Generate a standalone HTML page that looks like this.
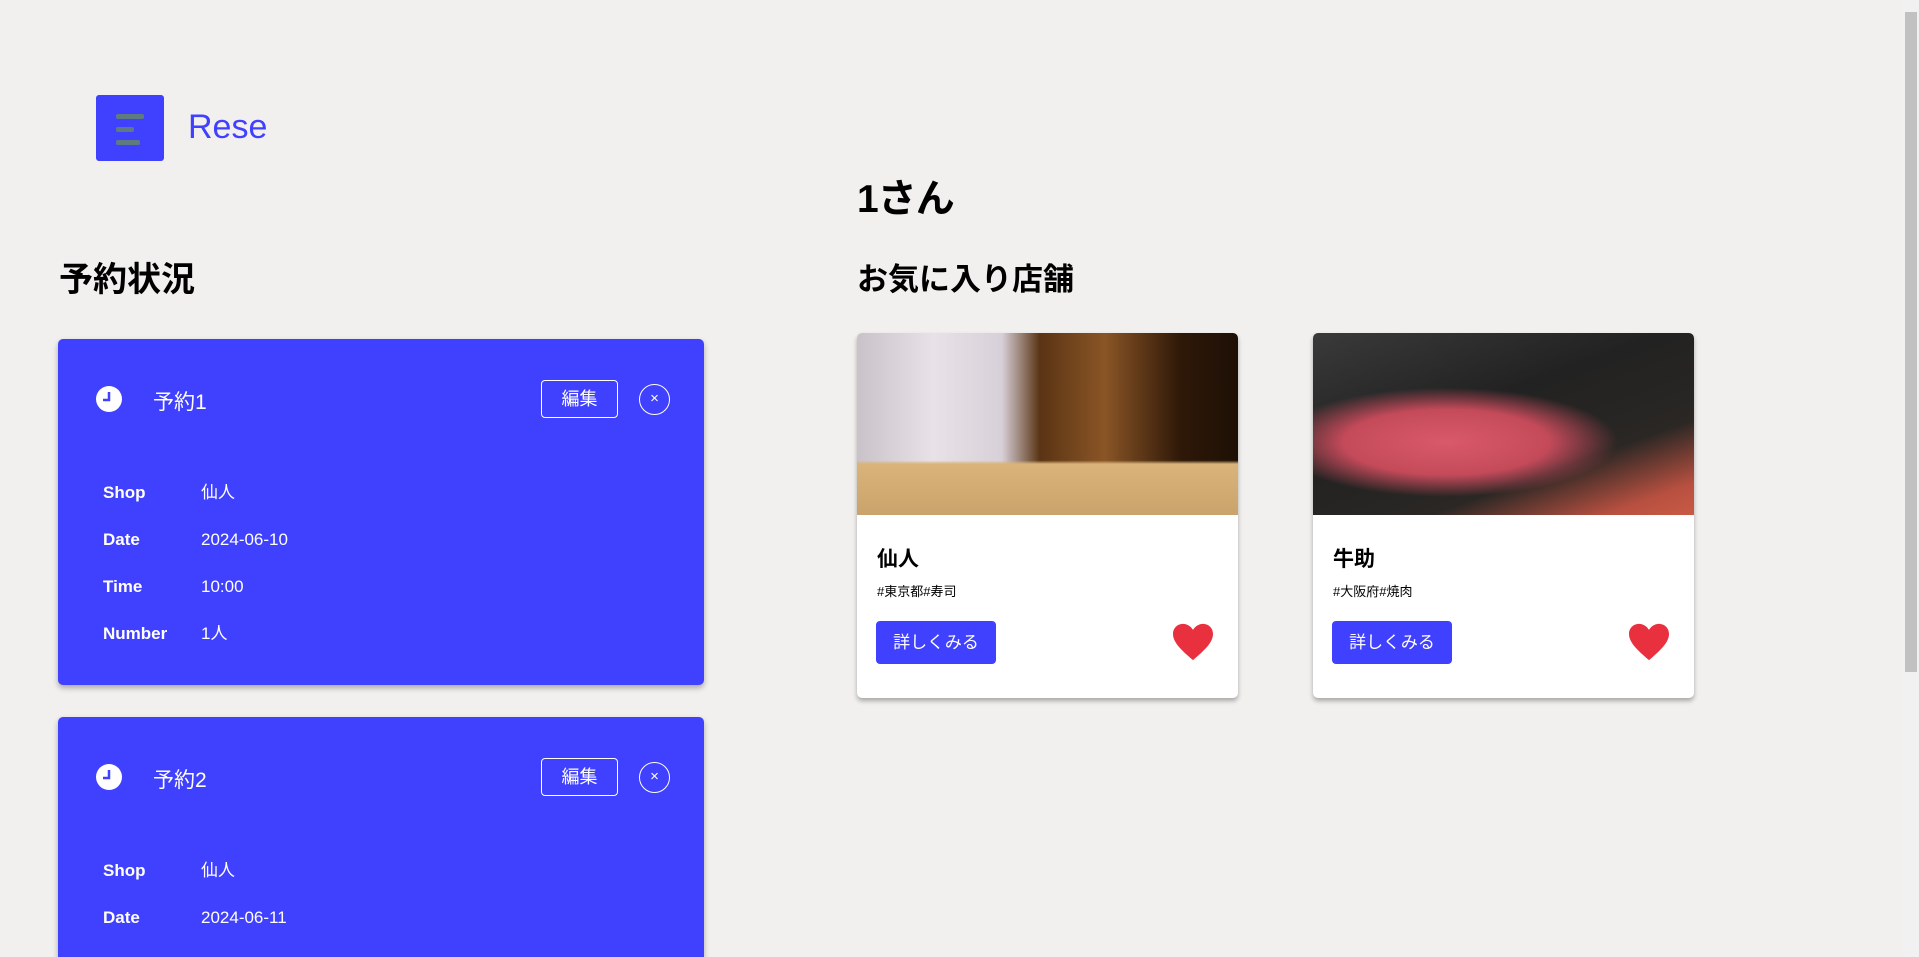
<!DOCTYPE html>
<html style="overflow:hidden;height:957px"><head><meta charset="utf-8"><style>
*{box-sizing:border-box;margin:0;padding:0}
body{width:1919px;height:957px;overflow:hidden;background:#f2f0ee;font-family:"Liberation Sans","Noto Sans CJK JP",sans-serif;position:relative;color:#000}
.abs{position:absolute}
.menu{left:96px;top:95px;width:68px;height:66px;background:#4040ff;border-radius:3px}
.menu i{position:absolute;left:20px;height:5px;background:#5f7a80;border-radius:2px}
.rc{left:58px;width:646px;background:#4040ff;border-radius:5px;box-shadow:0 3px 6px rgba(0,0,0,.3);color:#fff}
.rc .clk{position:absolute;width:26px;height:26px;border-radius:50%;background:#fff}
.row{position:absolute;font-size:17px;left:45px;line-height:20px;height:20px}
.row b{display:inline-block;width:98px}
.edit{position:absolute;left:483px;width:77px;height:38px;border:1px solid #fff;border-radius:4px;font-size:18px;text-align:center;line-height:36px}
.x{position:absolute;left:581px;width:31px;height:31px;border:1.5px solid #fff;border-radius:50%;text-align:center;line-height:28px;font-size:15px}
.sc{top:333px;width:381px;height:365px;background:#fff;border-radius:5px;box-shadow:0 3px 5px rgba(0,0,0,.3);overflow:hidden}
.sc .img{height:182px}
.sc h3{position:absolute;left:20px;top:210px;font-size:21px}
.sc .tag{position:absolute;left:20px;top:248px;font-size:13px}
.sc .btn{position:absolute;left:19px;top:288px;width:120px;height:43px;background:#4040ff;color:#fff;border-radius:4px;font-size:17px;text-align:center;line-height:43px}
.sc svg{position:absolute;left:314px;top:289px}
</style></head><body>
<div class="abs menu"><i style="top:19px;width:28px"></i><i style="top:32px;width:18px"></i><i style="top:45px;width:24px"></i></div>
<div class="abs" style="left:188px;top:108px;font-size:34px;color:#4040ff">Rese</div>
<div class="abs" style="left:857px;top:168px;font-size:39px;font-weight:bold;letter-spacing:-1px">1さん</div>
<div class="abs" style="left:59px;top:252px;font-size:34px;font-weight:bold">予約状況</div>
<div class="abs" style="left:857px;top:254px;font-size:31px;font-weight:bold">お気に入り店舗</div>

<div class="abs rc" style="top:339px;height:346px">
<div class="clk" style="left:38px;top:47px"><svg width="26" height="26"><path d="M13 6v8h-6" stroke="#4040ff" stroke-width="2.5" fill="none"/></svg></div>
<div class="abs" style="left:95px;top:47px;font-size:21px">予約1</div>
<div class="edit" style="top:41px">編集</div><div class="x" style="top:45px">×</div>
<div class="row" style="top:144px"><b>Shop</b>仙人</div>
<div class="row" style="top:191px"><b>Date</b>2024-06-10</div>
<div class="row" style="top:238px"><b>Time</b>10:00</div>
<div class="row" style="top:285px"><b>Number</b>1人</div>
</div>
<div class="abs rc" style="top:717px;height:240px;border-radius:5px 5px 0 0">
<div class="clk" style="left:38px;top:47px"><svg width="26" height="26"><path d="M13 6v8h-6" stroke="#4040ff" stroke-width="2.5" fill="none"/></svg></div>
<div class="abs" style="left:95px;top:47px;font-size:21px">予約2</div>
<div class="edit" style="top:41px">編集</div><div class="x" style="top:45px">×</div>
<div class="row" style="top:144px"><b>Shop</b>仙人</div>
<div class="row" style="top:191px"><b>Date</b>2024-06-11</div>
</div>

<div class="abs sc" style="left:857px">
<div class="img" style="background:linear-gradient(180deg,transparent 70%,#d9b47a 72%,#c9a36b 100%),linear-gradient(90deg,#c9c2c8 0%,#e8e2e8 20%,#d8d0d8 38%,#5a3414 48%,#8a5526 65%,#2e1808 85%,#1e1006 100%)"></div>
<h3>仙人</h3><div class="tag">#東京都#寿司</div><div class="btn">詳しくみる</div>
<svg width="44" height="40" viewBox="0 0 24 22"><path d="M12 21C5 15 1 11 1 6.5 1 3.4 3.4 1 6.5 1 8.7 1 10.8 2.3 12 4.3 13.2 2.3 15.3 1 17.5 1 20.6 1 23 3.4 23 6.5 23 11 19 15 12 21z" fill="#e8303e"/></svg>
</div>
<div class="abs sc" style="left:1313px">
<div class="img" style="background:radial-gradient(ellipse 45% 30% at 35% 60%,#d95a6a 0%,#c44a5a 60%,transparent 100%),linear-gradient(160deg,#3a3a3a 0%,#222 40%,#2a2724 70%,#b85040 90%,#c85a45 100%)"></div>
<h3>牛助</h3><div class="tag">#大阪府#焼肉</div><div class="btn">詳しくみる</div>
<svg width="44" height="40" viewBox="0 0 24 22"><path d="M12 21C5 15 1 11 1 6.5 1 3.4 3.4 1 6.5 1 8.7 1 10.8 2.3 12 4.3 13.2 2.3 15.3 1 17.5 1 20.6 1 23 3.4 23 6.5 23 11 19 15 12 21z" fill="#e8303e"/></svg>
</div>

<div class="abs" style="left:1903px;top:0;width:16px;height:957px;background:#f1f1f1"></div>
<div class="abs" style="left:1905px;top:12px;width:12px;height:660px;background:#c1c1c1"></div>
</body></html>
